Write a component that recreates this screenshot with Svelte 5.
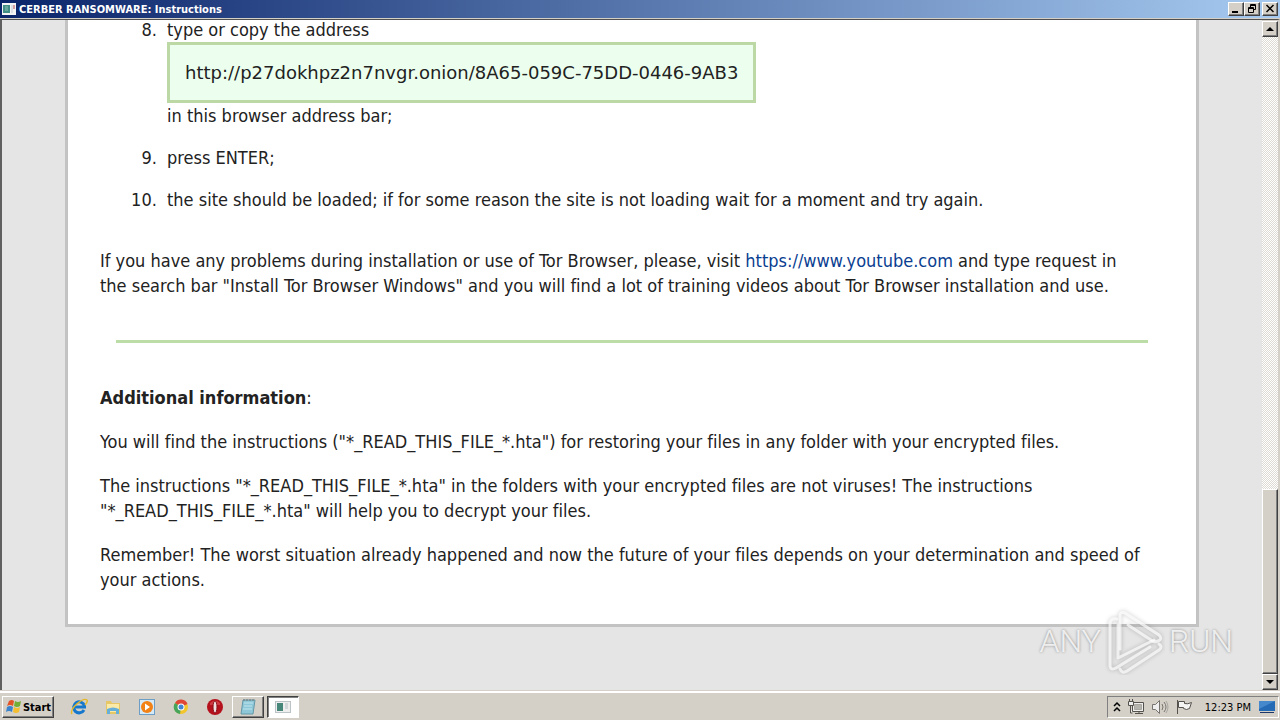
<script lang="ts">
	const onionUrl = 'http://p27dokhpz2n7nvgr.onion/8A65-059C-75DD-0446-9AB3';
	const time = '12:23 PM';
	const quickLaunch = ['Internet Explorer', 'Windows Explorer', 'Media Player', 'Chrome', 'Opera'];
</script>

<div class="desktop">
	<header class="titlebar">
		<svg class="app-icon" viewBox="0 0 14 12" aria-hidden="true">
			<rect width="14" height="12" fill="#f4f4f4" />
			<rect x="1" y="2" width="7" height="8" fill="#3f8d85" />
			<rect x="3" y="3" width="3" height="5" fill="#68a89c" />
			<path d="M9 3h2M9 5h2M9 7h2M9 9h2" stroke="#c5cbd2" />
			<path d="M12 2v4" stroke="#b84b50" />
		</svg>
		<h1>CERBER RANSOMWARE: Instructions</h1>
		<div class="window-buttons">
			<button class="raised" aria-label="Minimize">
				<svg viewBox="0 0 12 10"><path d="M2 8h6" stroke="#000" stroke-width="2" /></svg>
			</button>
			<button class="raised" aria-label="Restore">
				<svg viewBox="0 0 12 10" fill="none" stroke="#000">
					<path d="M4.5 4V.5h5v5H8M4 1.500h6M2.500 3.500h5v5h-5zM2 4.500h6" />
				</svg>
			</button>
			<button class="raised close" aria-label="Close">
				<svg viewBox="0 0 12 10"><path d="M2.500 1l7 7M9.500 1l-7 7" stroke="#000" stroke-width="1.500" /></svg>
			</button>
		</div>
	</header>

	<div class="window">
		<main class="viewport">
			<article class="sheet">
				<ol start="8">
					<li>
						type or copy the address
						<div class="address">{onionUrl}</div>
						in this browser address bar;
					</li>
					<li>press ENTER;</li>
					<li>the site should be loaded; if for some reason the site is not loading wait for a moment and try again.</li>
				</ol>
				<p>
					If you have any problems during installation or use of Tor Browser, please, visit
					<a href="https://www.youtube.com">https://www.youtube.com</a> and type request in<br />
					the search bar "Install Tor Browser Windows" and you will find a lot of training videos about Tor Browser
					installation and use.
				</p>
				<hr />
				<p><strong>Additional information</strong>:</p>
				<p>
					You will find the instructions ("*_READ_THIS_FILE_*.hta") for restoring your files in any folder with your
					encrypted files.
				</p>
				<p>
					The instructions "*_READ_THIS_FILE_*.hta" in the folders with your encrypted files are not viruses! The
					instructions<br />
					"*_READ_THIS_FILE_*.hta" will help you to decrypt your files.
				</p>
				<p>
					Remember! The worst situation already happened and now the future of your files depends on your
					determination and speed of<br />
					your actions.
				</p>
			</article>
		</main>

		<div class="scrollbar">
			<button class="raised" aria-label="Scroll up">
				<svg viewBox="0 0 12 12"><path d="M2 8h8L6 4z" /></svg>
			</button>
			<div class="track"></div>
			<div class="thumb raised"></div>
			<button class="raised" aria-label="Scroll down">
				<svg viewBox="0 0 12 12"><path d="M2 4h8L6 8z" /></svg>
			</button>
		</div>
	</div>

	<div class="watermark">
		<span>ANY</span>
		<svg viewBox="0 0 60 68" fill="none" stroke-linejoin="round" stroke-linecap="round" aria-hidden="true">
			<g class="logo-lines">
				<path d="M15 42V9q0-5 5-3l34 22q4 4-1 6t-7-1L23 18" />
				<path d="M12 12q-7-1-7 5v41q0 6 6 3l34-21" />
				<path d="M13 18v33l36-18M15 62q2 5 7 2l32-21q4-3 0-6" />
			</g>
		</svg>
		<span>RUN</span>
	</div>

	<footer class="taskbar">
		<button class="start raised">
			<svg viewBox="0 0 18 18" aria-hidden="true">
				<path d="M4 3q3-2 5 0L8 8q-3-2-6 0z" fill="#e35325" />
				<path d="M10 3q3 2 6 0l-1 5q-3 2-6 0z" fill="#72ae35" />
				<path d="M2 9q3-2 6 0l-1 5q-3-2-6 0z" fill="#3c83ce" />
				<path d="M9 9q3 2 6 0l-1 5q-3 2-6 0z" fill="#f4be30" />
			</svg>
			Start
		</button>
		<nav class="launch">
			{#each quickLaunch as name, i}
				<button aria-label={name}>
					<svg viewBox="0 0 18 18">
						{#if i === 0}
							<path d="M14 12a5.500 5.500 0 1 1 .5-4v1H5" fill="none" stroke="#1678cc" stroke-width="3" />
							<path d="M2 16C-1 11 13-1 17 2q1 2-2 5" fill="none" stroke="#e5b92c" stroke-width="1.500" />
						{:else if i === 1}
							<path d="M2 3h5l1 2h8v11H2z" fill="#e6c765" />
							<path d="M3 6h12v8H3z" fill="#fbeaa7" />
							<path d="M3 16v-5q6-3 12 0v5h-3v-3H6v3z" fill="#65afd8" />
						{:else if i === 2}
							<rect x="1.500" y="1.500" width="15" height="15" fill="#d6e9f6" stroke="#6d9fc6" />
							<circle cx="9" cy="9" r="6" fill="#f28216" />
							<path d="M7 5.500v7l5-3.500z" fill="#fff" />
						{:else if i === 3}
							<circle cx="9" cy="9" r="7" fill="#f2c52c" />
							<path d="M9 9L3 5a7 7 0 0 1 12.500 1z" fill="#df4635" />
							<path d="M9 9L3 5a7 7 0 0 0 5 11z" fill="#46a45b" />
							<circle cx="9" cy="9" r="3.500" fill="#fff" />
							<circle cx="9" cy="9" r="2.500" fill="#4285d4" />
						{:else}
							<circle cx="9" cy="9" r="8" fill="#b5111c" />
							<path d="M4 5q5-5 10 0v2H4z" fill="#cf3a42" />
							<ellipse cx="9" cy="9" rx="2" ry="6" fill="#f1dfe0" stroke="#851018" />
						{/if}
					</svg>
				</button>
			{/each}
		</nav>
		<div class="tasks">
			<button class="raised" aria-label="Notepad">
				<svg viewBox="0 0 18 18">
					<path d="M4 2h12l-2 14H2z" fill="#8ec8d8" stroke="#6498a7" />
					<path d="M5 5h9M5 8h8M4 11h9" stroke="#bee6ed" />
					<path d="M5 1v2M8 1v2M11 1v2M14 1v2" stroke="#777" />
				</svg>
			</button>
			<button class="active" aria-label="CERBER RANSOMWARE: Instructions">
				<svg viewBox="0 0 18 18">
					<rect x="1.500" y="3.500" width="15" height="11" fill="#eee" stroke="#bcc3c7" />
					<rect x="3" y="5" width="6" height="8" fill="#468779" />
					<path d="M11 6h3M11 8h3M11 10h3" stroke="#b7c0c4" />
				</svg>
			</button>
		</div>
		<div class="tray">
			<svg class="chevron" viewBox="0 0 8 12" fill="none" stroke="#000" stroke-width="1.500" aria-hidden="true">
				<path d="M1 5l3-3 3 3M1 10l3-3 3 3" />
			</svg>
			<svg viewBox="0 0 18 18" fill="none" stroke="#55524d" aria-hidden="true">
				<path d="M5.500 4.500h11v9h-11zM8 15.500h8M12 14v1" fill="#eee" />
				<path d="M7.500 6.500h7v5h-7z" fill="#b6b4ae" stroke="#aaa7a0" />
				<path d="M1.500 3.500h5v4h-5zM2.500 1v2M5.500 1v2M3.500 8v7h2" fill="#eee" />
			</svg>
			<svg viewBox="0 0 18 18" fill="none" stroke="#77746f" aria-hidden="true">
				<path d="M1.500 6.500h3l4-4v13l-4-4h-3z" fill="#eee" />
				<path d="M11 6q2 3 0 6M13 4q4 5 0 10" />
				<path d="M15 3q4 6 0 12" stroke="#aaa7a0" />
			</svg>
			<svg viewBox="0 0 18 18" stroke="#55524d" aria-hidden="true">
				<path d="M2.500 2v14" />
				<path d="M3.500 3.500h6v2q3 1 7-1l-2 6q-3 2-6 0v-1h-5z" fill="#f4f4f2" />
			</svg>
			<time>{time}</time>
			<svg viewBox="0 0 18 18" aria-hidden="true">
				<path d="M1 3h16v10H1z" fill="#246ab5" />
				<path d="M1 3h16L1 11z" fill="#4588cc" />
				<path d="M2 14h14v1H2z" fill="#1c3767" />
			</svg>
		</div>
	</footer>
</div>

<style>
	:global(body) {
		background: #d4d0c8;
	}

	.desktop {
		position: relative;
		display: flex;
		flex-direction: column;
		height: 100vh;
		overflow: hidden;
		font-family: 'DejaVu Sans Condensed', 'DejaVu Sans', sans-serif;
		font-size: 11px;
		color: #000;
	}

	button {
		display: flex;
		align-items: center;
		justify-content: center;
		box-sizing: border-box;
		padding: 0;
		border: 0;
		background: #d4d0c8;
		color: #000;
		font: inherit;
	}

	.raised {
		border: 1px solid;
		border-color: #fff #404040 #404040 #fff;
		box-shadow: inset -1px -1px #808080;
		background: #d4d0c8;
	}

	.titlebar {
		display: flex;
		align-items: center;
		height: 18px;
		padding: 0 2px;
		border-bottom: 1px solid #d4d0c8;
		background: linear-gradient(90deg, #0a246a, #a6caf0);
		color: #fff;
	}

	.app-icon {
		width: 14px;
		height: 12px;
	}

	h1 {
		flex: 1;
		margin: 0 0 0 3px;
		font-size: 11px;
		font-weight: bold;
	}

	.window-buttons {
		display: flex;
	}

	.window-buttons button {
		width: 16px;
		height: 14px;
	}

	.window-buttons svg {
		width: 12px;
		height: 10px;
	}

	.window-buttons .close {
		margin-left: 2px;
	}

	.window {
		display: flex;
		flex: 1;
		min-height: 0;
		border: solid;
		border-width: 1px 2px 0 2px;
		border-color: #505050 #d4d0c8 #fff #606060;
	}

	.viewport {
		flex: 1;
		overflow: hidden;
		background: #e5e5e5;
	}

	.sheet {
		margin: -3px 5% 0;
		padding: 0 32px;
		border: 3px solid #c3c3c3;
		border-top: 0;
		background: #fff;
		color: #222;
		font-size: 18px;
		font-variant-ligatures: none;
		line-height: 25px;
	}

	ol {
		margin: 0 0 36px;
		padding-left: 62px;
	}

	li {
		padding-left: 5px;
	}

	li + li {
		margin-top: 17px;
	}

	.address {
		width: fit-content;
		padding: 15px;
		border: 3px solid #bbd8a5;
		background: #ecffee;
		font-family: 'DejaVu Sans', sans-serif;
	}

	p {
		margin: 0;
		white-space: nowrap;
	}

	p + p {
		margin-top: 19px;
	}

	p:last-child {
		margin-bottom: 32px;
	}

	a {
		color: #0a3e91;
		text-decoration: none;
	}

	hr {
		height: 3px;
		margin: 42px 16px;
		border: 0;
		background: #bcdda8;
	}

	.scrollbar {
		display: flex;
		flex-direction: column;
		width: 16px;
		padding-top: 1px;
	}

	.scrollbar button {
		height: 16px;
	}

	.scrollbar svg {
		width: 12px;
		height: 12px;
	}

	.track {
		flex: 453;
		background: repeating-conic-gradient(#fff 0 25%, #dedbd5 0 50%) 0 0 / 2px 2px;
	}

	.thumb {
		flex: 183;
	}

	.watermark {
		position: absolute;
		right: 47px;
		bottom: 45px;
		display: flex;
		align-items: center;
		gap: 4px;
		color: rgba(255, 255, 255, 0.8);
		font-family: Roboto, 'Liberation Sans', sans-serif;
		font-size: 32px;
		font-weight: 300;
		text-shadow: 0 0 3px rgba(0, 0, 0, 0.4);
	}

	.watermark svg {
		width: 60px;
		height: 68px;
	}

	.logo-lines {
		stroke: rgba(255, 255, 255, 0.7);
		stroke-width: 3;
		filter: drop-shadow(0 0 2px rgba(0, 0, 0, 0.3));
	}

	.taskbar {
		display: flex;
		align-items: center;
		box-sizing: border-box;
		height: 30px;
		padding: 3px 1px 0 2px;
		border-top: 1px solid #d4d0c8;
		box-shadow: inset 0 2px #fff;
		background: #d4d0c8;
	}

	.taskbar svg {
		width: 18px;
		height: 18px;
	}

	.start {
		width: 52px;
		height: 22px;
		font-weight: bold;
	}

	.launch {
		display: flex;
		margin-left: 8px;
	}

	.launch button {
		width: 34px;
		height: 22px;
	}

	.tasks {
		display: flex;
		gap: 3px;
	}

	.tasks button {
		width: 32px;
		height: 22px;
	}

	.tasks .active {
		border: 1px solid;
		border-color: #404040 #fff #fff #404040;
		box-shadow: inset 1px 1px #808080;
		background: #fff;
	}

	.tray {
		display: flex;
		align-items: center;
		gap: 6px;
		box-sizing: border-box;
		height: 22px;
		margin-left: auto;
		padding: 0 2px 0 5px;
		border: 1px solid;
		border-color: #808080 #fff #fff #808080;
	}

	.tray .chevron {
		width: 8px;
		height: 12px;
	}

	time {
		margin: 0 1px 0 6px;
	}
</style>
